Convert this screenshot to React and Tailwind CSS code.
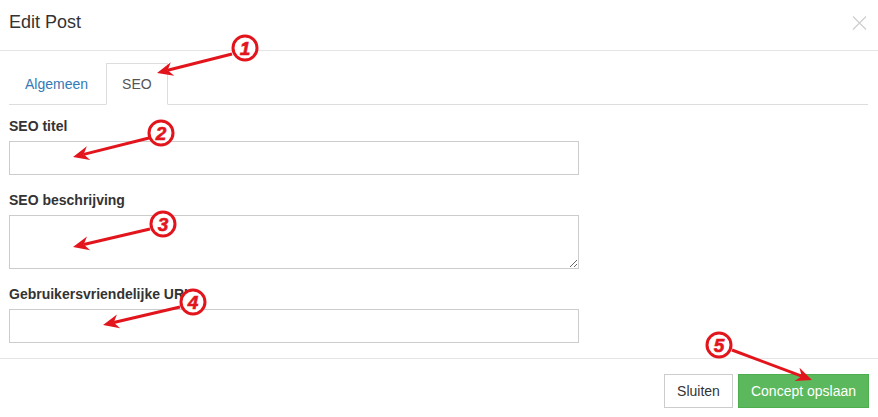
import React from "react";

const RED = "#e3151c";

// callouts drawn on top of the screenshot
const callouts = [
  { n: "1", cx: 245, cy: 48, from: [232, 54], to: [157, 73] },
  { n: "2", cx: 161, cy: 133, from: [149, 138], to: [73, 157] },
  { n: "3", cx: 163, cy: 224, from: [150, 229], to: [73, 247] },
  { n: "4", cx: 193, cy: 302, from: [180, 307], to: [103, 325] },
  { n: "5", cx: 719, cy: 345, from: [732, 350], to: [812, 380] },
];

const Callout = ({ n, cx, cy, from, to }) => {
  const dx = to[0] - from[0];
  const dy = to[1] - from[1];
  const len = Math.hypot(dx, dy);
  const ux = dx / len;
  const uy = dy / len;
  const headLen = 16;
  const headW = 7;
  const bx = to[0] - ux * headLen;
  const by = to[1] - uy * headLen;
  const mx = to[0] - ux * (headLen - 5);
  const my = to[1] - uy * (headLen - 5);
  const pts = [
    [to[0], to[1]],
    [bx - uy * headW, by + ux * headW],
    [mx, my],
    [bx + uy * headW, by - ux * headW],
  ]
    .map((p) => p.join(","))
    .join(" ");

  return (
    <g>
      <line
        x1={from[0]}
        y1={from[1]}
        x2={mx}
        y2={my}
        stroke={RED}
        strokeWidth="3"
      />
      <polygon points={pts} fill={RED} />
      <circle cx={cx} cy={cy} r="12" fill="#fff" stroke={RED} strokeWidth="3" />
      <text
        x={cx}
        y={cy + 7}
        textAnchor="middle"
        fill={RED}
        stroke={RED}
        strokeWidth="0.6"
        fontSize="19"
        fontWeight="bold"
        fontStyle="italic"
        fontFamily="'Liberation Sans', Arial, sans-serif"
      >
        {n}
      </text>
    </g>
  );
};

const Field = ({ label, textarea }) => (
  <div className="mb-[15px]">
    <label className="block mb-[5px] leading-[20px] text-[14px] font-bold text-[#333]">
      {label}
    </label>
    {textarea ? (
      <textarea className="block w-[570px] h-[54px] border border-[#ccc] bg-white outline-none" />
    ) : (
      <input
        type="text"
        className="block w-[570px] h-[34px] border border-[#ccc] bg-white outline-none"
      />
    )}
  </div>
);

export default function App() {
  return (
    <div
      className="relative w-[878px] h-[417px] bg-white overflow-hidden text-[14px] text-[#333]"
      style={{ fontFamily: "'Liberation Sans', Arial, sans-serif" }}
    >
      {/* header */}
      <div className="h-[51px] border-b border-[#e5e5e5] flex items-start justify-between pl-[9px] pr-[11px]">
        <h4 className="pt-[9px] text-[18px] leading-[26px] text-[#333]">Edit Post</h4>
        <svg width="15" height="14" viewBox="0 0 15 14" className="mt-[16px]">
          <path d="M1 0.5 L14 13.5 M14 0.5 L1 13.5" stroke="#cfcfcf" strokeWidth="1.3" />
        </svg>
      </div>

      {/* body */}
      <div className="pl-[9px] pr-[10px] pt-[12px]">
        <div className="flex h-[42px] border-b border-[#ddd]">
          <a className="-mb-px mr-[2px] px-[15px] py-[10px] leading-[20px] border border-transparent text-[#337ab7]">
            Algemeen
          </a>
          <a className="-mb-px px-[15px] py-[10px] leading-[20px] border border-[#ddd] border-b-transparent bg-white text-[#555]">
            SEO
          </a>
        </div>
        <div className="pt-[11px]">
          <Field label="SEO titel" />
          <Field label="SEO beschrijving" textarea />
          <Field label="Gebruikersvriendelijke URL" />
        </div>
      </div>

      {/* footer */}
      <div className="border-t border-[#e5e5e5] pt-[15px] pr-[9px] flex justify-end gap-[5px]">
        <button className="w-[69px] h-[34px] border border-[#ccc] bg-white text-[#333] text-[14px]">
          Sluiten
        </button>
        <button className="w-[131px] h-[34px] border border-[#4cae4c] bg-[#5cb85c] text-white text-[14px]">
          Concept opslaan
        </button>
      </div>

      <svg
        className="absolute inset-0 pointer-events-none"
        width="878"
        height="417"
        viewBox="0 0 878 417"
      >
        {callouts.map((c) => (
          <Callout key={c.n} {...c} />
        ))}
      </svg>
    </div>
  );
}
